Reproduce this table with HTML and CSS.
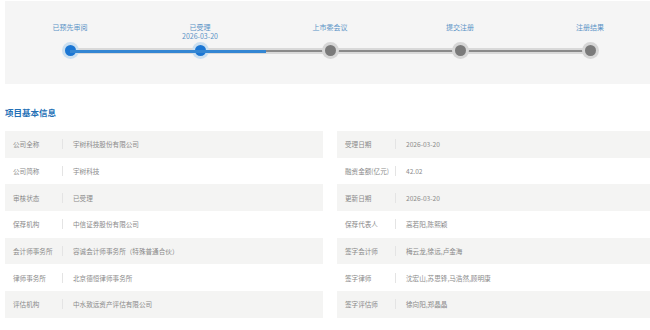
FILE: index.html
```html
<!DOCTYPE html>
<html lang="zh-CN">
<head>
<meta charset="utf-8">
<link rel="stylesheet" href="styles.css">
</head>
<body>
<div class="page">
  <div class="progress-panel">
    <div class="track">
      <div class="track-fill" style="width: 196px"></div>
    </div>
    <div class="steps">
      <div class="step done"><div class="step-label">已预先审阅</div><div class="dot"></div></div>
      <div class="step done"><div class="step-label">已受理<br>2026-03-20</div><div class="dot"></div></div>
      <div class="step"><div class="step-label">上市委会议</div><div class="dot"></div></div>
      <div class="step"><div class="step-label">提交注册</div><div class="dot"></div></div>
      <div class="step"><div class="step-label">注册结果</div><div class="dot"></div></div>
    </div>
  </div>

  <h2 class="section-title">项目基本信息</h2>

  <div class="info-grid">
    <div class="row shade"><span class="k">公司全称</span><span class="v">宇树科技股份有限公司</span></div>
    <div class="row shade"><span class="k">受理日期</span><span class="v">2026-03-20</span></div>
    <div class="row"><span class="k">公司简称</span><span class="v">宇树科技</span></div>
    <div class="row"><span class="k">融资金额(亿元)</span><span class="v">42.02</span></div>
    <div class="row shade"><span class="k">审核状态</span><span class="v">已受理</span></div>
    <div class="row shade"><span class="k">更新日期</span><span class="v">2026-03-20</span></div>
    <div class="row"><span class="k">保荐机构</span><span class="v">中信证券股份有限公司</span></div>
    <div class="row"><span class="k">保荐代表人</span><span class="v">高若阳,陈熙颖</span></div>
    <div class="row shade"><span class="k">会计师事务所</span><span class="v">容诚会计师事务所（特殊普通合伙）</span></div>
    <div class="row shade"><span class="k">签字会计师</span><span class="v">梅云龙,徐远,卢金海</span></div>
    <div class="row"><span class="k">律师事务所</span><span class="v">北京德恒律师事务所</span></div>
    <div class="row"><span class="k">签字律师</span><span class="v">沈宏山,苏思锋,马浩然,顾明康</span></div>
    <div class="row shade"><span class="k">评估机构</span><span class="v">中水致远资产评估有限公司</span></div>
    <div class="row shade"><span class="k">签字评估师</span><span class="v">徐向阳,郑晶晶</span></div>
  </div>
</div>
</body>
</html>
```

FILE: styles.css
```css
* { box-sizing: border-box; }
html, body { margin: 0; padding: 0; background: #fff; }
body {
  font-family: "Noto Sans CJK SC", "Open Sans", sans-serif;
  width: 650px;
  height: 330px;
  overflow: hidden;
}
.page {
  width: 650px;
  margin-left: 5px;
  padding-top: 1px;
}
.progress-panel {
  position: relative;
  background: #f5f5f5;
  height: 83px;
}
.track {
  position: absolute;
  left: 65px;
  top: 47px;
  width: 520px;
  height: 6px;
  background: #d9d9d9;
  border-radius: 3px;
}
.track::after {
  content: "";
  position: absolute;
  left: 0;
  right: 0;
  top: 2px;
  height: 2px;
  background: #8a8a8a;
}
.track-fill {
  position: absolute;
  left: 0;
  top: 1.5px;
  height: 3px;
  background: #3386d3;
  z-index: 1;
}
.steps {
  position: relative;
  display: grid;
  grid-template-columns: repeat(5, 130px);
  padding-top: 22px;
}
.step {
  display: flex;
  flex-direction: column;
  align-items: center;
  height: 60px;
}
.step-label {
  font-size: 7px;
  line-height: 9px;
  color: #5a93c6;
  text-align: center;
  height: 19px;
}
.dot {
  width: 17px;
  height: 17px;
  border-radius: 50%;
  background: #d6d6d6;
  display: flex;
  align-items: center;
  justify-content: center;
}
.dot::before {
  content: "";
  width: 11px;
  height: 11px;
  border-radius: 50%;
  background: #7a7a7a;
}
.step.done .dot { background: #cadff0; }
.step.done .dot::before { background: #1b76d3; }

.section-title {
  margin: 22px 0 0;
  font-size: 8.5px;
  line-height: 12px;
  font-weight: bold;
  color: #2470b6;
}
.info-grid {
  margin-top: 13px;
  display: grid;
  grid-template-columns: 318px 318px;
  column-gap: 14px;
}
.row {
  height: 26.67px;
  display: flex;
  align-items: center;
  font-size: 6.6px;
  color: #8a8a8a;
}
.row.shade { background: #f4f4f3; }
.row .k {
  width: 57px;
  padding-left: 8px;
  white-space: nowrap;
}
.row .v {
  padding-left: 10px;
  border-left: 1px solid #e4e4e4;
  line-height: 10px;
  white-space: nowrap;
}
.info-grid .row:nth-child(2n) .k { width: 58px; }
```
